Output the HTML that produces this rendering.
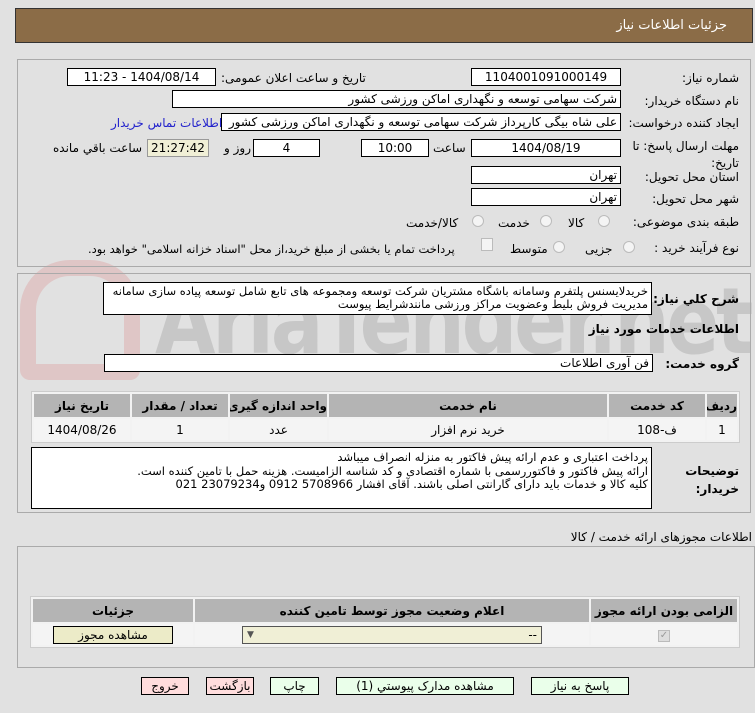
<!DOCTYPE html>
<html><head><meta charset="utf-8"><style>
*{box-sizing:border-box;margin:0;padding:0}
body{width:755px;height:713px;background:#e1e1e1;font-family:"DejaVu Sans","Liberation Sans",sans-serif;font-size:12px;color:#000;position:relative;overflow:hidden;direction:rtl}
.a{position:absolute;white-space:nowrap}
.in{position:absolute;background:#fff;border:1px solid #000;height:18px;line-height:16px;padding:0 3px;white-space:nowrap;overflow:hidden}
.c{text-align:center}
.panel{position:absolute;border:1px solid #aaa}
.rad{position:absolute;width:12px;height:12px;border:1px solid #bbb;border-radius:50%;background:#f4f4f4}
table{position:absolute;border-collapse:separate;border-spacing:2px;background:#f2f2f2;border:1px solid #ccc;table-layout:fixed}
th{background:#b4b4b4;font-weight:bold;height:23px;font-size:12px;white-space:nowrap;overflow:hidden}
td{background:#f4f4f4;height:21px;text-align:center}
.btn{position:absolute;height:18px;border:1px solid #000;text-align:center;line-height:16px;background:#eaffea;white-space:nowrap}
</style></head><body>
<div class="a" style="left:15px;top:8px;width:738px;height:35px;background:#8b6c47;border:1px solid #333"></div>
<div class="a" style="right:28px;top:18px;color:#fff;font-size:13px">جزئیات اطلاعات نیاز</div>

<div class="a" style="left:155px;top:268px;font-size:92px;font-weight:bold;color:rgba(140,140,140,0.3);direction:ltr;letter-spacing:-4px;transform:scaleX(0.85);transform-origin:left">AriaTender.net</div>
<div class="a" style="left:20px;top:260px;width:120px;height:120px;border:16px solid rgba(215,90,90,0.2);border-radius:50px 50px 10px 10px"></div>

<div class="panel" style="left:17px;top:59px;width:734px;height:208px"></div>
<div class="a" style="right:16px;top:71px">شماره نیاز:</div>
<div class="in c" style="left:471px;top:68px;width:150px">1104001091000149</div>
<div class="a" style="left:221px;top:71px">تاریخ و ساعت اعلان عمومی:</div>
<div class="in c" style="left:67px;top:68px;width:149px">1404/08/14 - 11:23</div>
<div class="a" style="right:16px;top:94px">نام دستگاه خریدار:</div>
<div class="in" style="left:172px;top:90px;width:449px">شرکت سهامی توسعه و نگهداری اماکن ورزشی کشور</div>
<div class="a" style="right:16px;top:116px">ایجاد کننده درخواست:</div>
<div class="in" style="left:221px;top:113px;width:400px">علی شاه بیگی کارپرداز شرکت سهامی توسعه و نگهداری اماکن ورزشی کشور</div>
<div class="a" style="left:111px;top:116px;color:#2222cc">اطلاعات تماس خریدار</div>
<div class="a" style="right:16px;top:138px;line-height:17px;white-space:normal;width:115px">مهلت ارسال پاسخ: تا تاریخ:</div>
<div class="in c" style="left:471px;top:139px;width:150px">1404/08/19</div>
<div class="a" style="left:433px;top:141px">ساعت</div>
<div class="in c" style="left:361px;top:139px;width:68px">10:00</div>
<div class="in c" style="left:253px;top:139px;width:67px">4</div>
<div class="a" style="left:224px;top:141px">روز و</div>
<div class="in c" style="left:147px;top:139px;width:62px;background:#f0efd6;border-color:#999">21:27:42</div>
<div class="a" style="left:53px;top:141px">ساعت باقي مانده</div>
<div class="a" style="right:16px;top:170px">استان محل تحویل:</div>
<div class="in" style="left:471px;top:166px;width:150px">تهران</div>
<div class="a" style="right:16px;top:192px">شهر محل تحویل:</div>
<div class="in" style="left:471px;top:188px;width:150px">تهران</div>
<div class="a" style="right:16px;top:215px">طبقه بندی موضوعی:</div>
<div class="rad" style="left:598px;top:215px"></div><div class="a" style="left:568px;top:216px">کالا</div>
<div class="rad" style="left:540px;top:215px"></div><div class="a" style="left:498px;top:216px">خدمت</div>
<div class="rad" style="left:472px;top:215px"></div><div class="a" style="left:406px;top:216px">کالا/خدمت</div>
<div class="a" style="right:16px;top:241px">نوع فرآیند خرید :</div>
<div class="rad" style="left:623px;top:241px"></div><div class="a" style="left:585px;top:242px">جزیی</div>
<div class="rad" style="left:553px;top:241px"></div><div class="a" style="left:510px;top:242px">متوسط</div>
<div class="a" style="left:481px;top:238px;width:12px;height:13px;border:1px solid #bbb;background:#f4f4f4"></div>
<div class="a" style="left:88px;top:242px;font-size:11.5px">پرداخت تمام یا بخشی از مبلغ خرید،از محل "اسناد خزانه اسلامی" خواهد بود.</div>

<div class="panel" style="left:17px;top:273px;width:734px;height:240px"></div>
<div class="a" style="right:16px;top:292px;font-weight:bold">شرح کلي نیاز:</div>
<div class="in" style="left:103px;top:282px;width:549px;height:33px;white-space:normal;line-height:13px;padding-top:2px;font-size:11.5px">خریدلایسنس پلتفرم وسامانه باشگاه مشتریان شرکت توسعه ومجموعه های تابع شامل توسعه پیاده سازی سامانه مدیریت فروش بلیط وعضویت مراکز ورزشی مانندشرایط پیوست</div>
<div class="a" style="right:16px;top:322px;font-weight:bold">اطلاعات خدمات مورد نیاز</div>
<div class="a" style="right:16px;top:357px;font-weight:bold">گروه خدمت:</div>
<div class="in" style="left:104px;top:354px;width:549px">فن آوری اطلاعات</div>
<table style="left:31px;top:391px;width:709px">
<tr><th style="width:30px">ردیف</th><th style="width:96px">کد خدمت</th><th>نام خدمت</th><th style="width:97px">واحد اندازه گیری</th><th style="width:96px">تعداد / مقدار</th><th style="width:96px">تاریخ نیاز</th></tr>
<tr><td>1</td><td>ف-108</td><td>خرید نرم افزار</td><td>عدد</td><td>1</td><td>1404/08/26</td></tr>
</table>
<div class="a" style="right:16px;top:462px;font-weight:bold;line-height:18px;white-space:normal;width:70px">توضیحات خریدار:</div>
<div class="in" style="left:31px;top:447px;width:621px;height:62px;white-space:normal;line-height:13.5px;padding-top:3px;font-size:11.5px">پرداخت اعتباری و عدم ارائه پیش فاکتور به منزله انصراف میباشد<br>ارائه پیش فاکتور و فاکتوررسمی با شماره اقتصادی و کد شناسه الزامیست. هزینه حمل با تامین کننده است.<br>کلیه کالا و خدمات باید دارای گارانتی اصلی باشند. آقای افشار 5708966 0912 و23079234 021</div>

<div class="a" style="right:3px;top:530px">اطلاعات مجوزهای ارائه خدمت / کالا</div>
<div class="panel" style="left:17px;top:546px;width:738px;height:122px"></div>
<table style="left:30px;top:596px;width:710px">
<tr><th style="width:146px">الزامی بودن ارائه مجوز</th><th>اعلام وضعیت مجوز توسط تامین کننده</th><th style="width:160px">جزئیات</th></tr>
<tr><td><span style="display:inline-block;width:12px;height:12px;border:1px solid #bbb;background:#ddd;color:#999;font-size:10px;line-height:10px">✓</span></td>
<td><div style="margin:0 auto;width:300px;height:18px;border:1px solid #555;background:#f0efd6;text-align:right;padding-right:4px;position:relative;line-height:16px">--<span style="position:absolute;left:4px;font-size:9px;color:#555">▼</span></div></td>
<td><div style="margin:0 auto;width:120px;height:18px;border:1px solid #000;background:#ecebc8;line-height:16px">مشاهده مجوز</div></td></tr>
</table>

<div class="btn" style="left:531px;top:677px;width:98px">پاسخ به نیاز</div>
<div class="btn" style="left:336px;top:677px;width:178px">مشاهده مدارک پیوستي (1)</div>
<div class="btn" style="left:270px;top:677px;width:49px">چاپ</div>
<div class="btn" style="left:206px;top:677px;width:48px;background:#ffdddd">بازگشت</div>
<div class="btn" style="left:141px;top:677px;width:48px;background:#ffdddd">خروج</div>
</body></html>
